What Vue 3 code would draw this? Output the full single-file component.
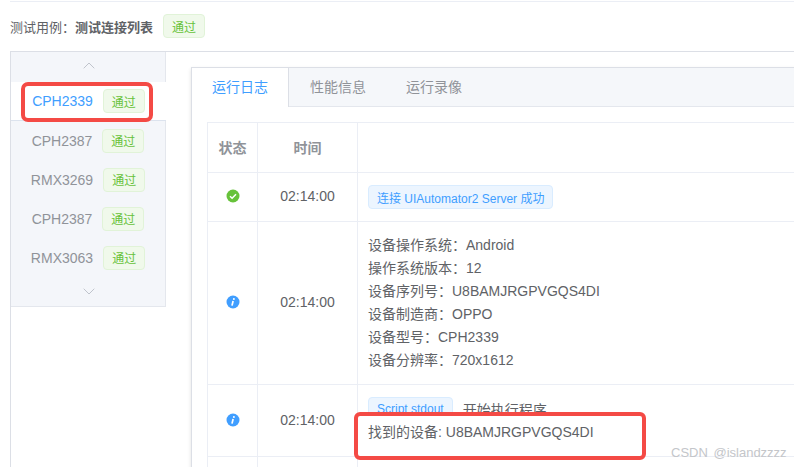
<script setup>
const devices = [
  { name: 'CPH2339', active: true },
  { name: 'CPH2387' },
  { name: 'RMX3269' },
  { name: 'CPH2387' },
  { name: 'RMX3063' }
]
const tabs = ['运行日志', '性能信息', '运行录像']
const infoLines = [
  '设备操作系统：Android',
  '操作系统版本：12',
  '设备序列号：U8BAMJRGPVGQS4DI',
  '设备制造商：OPPO',
  '设备型号：CPH2339',
  '设备分辨率：720x1612'
]
</script>

<template>
  <div class="page">
    <div class="title">
      <span class="label">测试用例：</span><span class="name">测试连接列表</span>
      <span class="tag green">通过</span>
    </div>

    <div class="frame">
      <aside class="nav">
        <div class="arrow up">
          <svg width="12" height="7" viewBox="0 0 12 7"><path d="M.7 6.3 6 1l5.3 5.3" fill="none" stroke="#c0c4cc" /></svg>
        </div>
        <div v-for="(d, i) in devices" :key="i" class="device" :class="{ active: d.active }">
          <span class="dev-name">{{ d.name }}</span>
          <span class="tag green">通过</span>
        </div>
        <div class="arrow down">
          <svg width="12" height="7" viewBox="0 0 12 7"><path d="M.7.7 6 6 11.3.7" fill="none" stroke="#c0c4cc" /></svg>
        </div>
      </aside>

      <main class="main">
        <section class="card">
          <div class="tabs">
            <div v-for="(t, i) in tabs" :key="t" class="tab" :class="{ current: i === 0 }">{{ t }}</div>
          </div>
          <div class="body">
            <div class="log">
              <div class="row head">
                <div class="c1">状态</div>
                <div class="c2">时间</div>
                <div class="c3"></div>
              </div>
              <div class="row r-ok">
                <div class="c1">
                  <svg width="14" height="14" viewBox="0 0 14 14">
                    <circle cx="7" cy="7" r="6.5" fill="#67c23a" />
                    <path d="M4 7.2 6.1 9.2 10 5.2" fill="none" stroke="#fff" stroke-width="1.5" />
                  </svg>
                </div>
                <div class="c2">02:14:00</div>
                <div class="c3"><span class="tag blue">连接 UIAutomator2 Server 成功</span></div>
              </div>
              <div class="row r-info">
                <div class="c1">
                  <svg width="14" height="14" viewBox="0 0 14 14">
                    <circle cx="7" cy="7" r="6.5" fill="#409eff" />
                    <circle cx="7.9" cy="3.9" r="1" fill="#fff" />
                    <path d="M7.1 6 6 10.6" fill="none" stroke="#fff" stroke-width="1.7" />
                  </svg>
                </div>
                <div class="c2">02:14:00</div>
                <div class="c3 lines">
                  <div v-for="l in infoLines" :key="l">{{ l }}</div>
                </div>
              </div>
              <div class="row r-script">
                <div class="c1">
                  <svg width="14" height="14" viewBox="0 0 14 14">
                    <circle cx="7" cy="7" r="6.5" fill="#409eff" />
                    <circle cx="7.9" cy="3.9" r="1" fill="#fff" />
                    <path d="M7.1 6 6 10.6" fill="none" stroke="#fff" stroke-width="1.7" />
                  </svg>
                </div>
                <div class="c2">02:14:00</div>
                <div class="c3 script">
                  <div class="script-top">
                    <span class="tag blue">Script stdout</span>
                    <span>开始执行程序</span>
                  </div>
                  <div class="found"><span>找到的设备: U8BAMJRGPVGQS4DI</span></div>
                </div>
              </div>
              <div class="row r-rest">
                <div class="c1"></div>
                <div class="c2"></div>
                <div class="c3"></div>
              </div>
            </div>
          </div>
        </section>
      </main>
    </div>

    <div class="watermark">CSDN @islandzzzz</div>
  </div>
</template>

<style scoped>
.page {
  position: relative;
  box-sizing: border-box;
  width: 794px;
  height: 467px;
  padding-left: 10px;
  overflow: hidden;
  background: #fff;
  color: #606266;
  font-family: "Liberation Sans", "Noto Sans CJK SC", sans-serif;
  font-size: 14px;
}
.title {
  display: flex;
  align-items: center;
  height: 24px;
  margin-top: 1px;
  padding-top: 12px;
  border-top: 1px solid #ebeef5;
  font-size: 13px;
}
.name {
  font-weight: 700;
}
.title .tag {
  margin-left: 10px;
}
.tag {
  box-sizing: border-box;
  display: inline-flex;
  align-items: center;
  height: 24px;
  padding: 0 8px;
  border: 1px solid;
  border-radius: 4px;
  font-size: 12px;
  white-space: nowrap;
}
.green {
  color: #67c23a;
  background: #f0f9eb;
  border-color: #e1f3d8;
}
.blue {
  color: #409eff;
  background: #ecf5ff;
  border-color: #d9ecff;
}
.frame {
  display: flex;
  align-items: flex-start;
  width: 810px;
  height: 420px;
  margin-top: 13px;
  border-top: 1px solid #dcdfe6;
  border-left: 1px solid #dcdfe6;
}
.nav {
  box-sizing: border-box;
  flex: none;
  width: 155px;
  height: 255px;
  background: #f4f6fa;
  border-right: 1px solid #e4e7ed;
  border-bottom: 1px solid #e4e7ed;
}
.arrow {
  display: flex;
  justify-content: center;
  padding-left: 1px;
}
.arrow.up {
  height: 30px;
  padding-top: 10px;
  box-sizing: border-box;
}
.arrow.down {
  height: 30px;
  padding-top: 11px;
  box-sizing: border-box;
}
.device {
  position: relative;
  display: flex;
  align-items: center;
  justify-content: center;
  gap: 10px;
  height: 39px;
  color: #909399;
  box-sizing: border-box;
}
.device.active {
  width: 155px;
  height: 39px;
  background: #fff;
  color: #409eff;
  border-bottom: 1px solid #dce3ee;
}
.device.active::after {
  content: "";
  position: absolute;
  left: 10px;
  top: 0;
  width: 132px;
  height: 40px;
  box-sizing: border-box;
  border: 4px solid #f44a45;
  border-radius: 7px;
}
.main {
  flex: 1;
  padding: 15px 0 0 25px;
  min-width: 0;
}
.card {
  height: 420px;
  background: #fff;
  border: 1px solid #dcdfe6;
  box-shadow: 0 2px 4px rgba(0, 0, 0, 0.12);
}
.tabs {
  display: flex;
  height: 38px;
  background: #f5f7fa;
  border-bottom: 1px solid #e4e7ed;
}
.tab {
  height: 38px;
  padding: 0 20px;
  line-height: 38px;
  color: #909399;
}
.tab:nth-child(2) {
  margin-left: 1px;
}
.tab.current {
  height: 39px;
  background: #fff;
  color: #409eff;
  border-right: 1px solid #dcdfe6;
}
.body {
  padding: 15px;
}
.log {
  border-top: 1px solid #ebeef5;
  border-left: 1px solid #ebeef5;
}
.row {
  display: flex;
  box-sizing: border-box;
  border-bottom: 1px solid #ebeef5;
}
.c1,
.c2 {
  flex: none;
  display: flex;
  align-items: center;
  justify-content: center;
  box-sizing: border-box;
  padding-bottom: 2px;
  border-right: 1px solid #ebeef5;
}
.c1 {
  width: 50px;
}
.c2 {
  width: 100px;
}
.c3 {
  flex: 1;
  display: flex;
  align-items: center;
  padding: 0 10px;
}
.head {
  height: 50px;
  color: #909399;
  font-weight: 700;
}
.r-ok {
  height: 49px;
}
.r-info {
  height: 163px;
}
.lines {
  display: block;
  padding-top: 12px;
  line-height: 23px;
}
.r-script {
  height: 72px;
}
.script {
  display: block;
  padding-top: 12px;
}
.script-top {
  display: flex;
  align-items: center;
  gap: 10px;
}
.found {
  position: relative;
  line-height: 23px;
}
.found::before {
  content: "";
  position: absolute;
  left: -14px;
  top: -9px;
  width: 292px;
  height: 48px;
  box-sizing: border-box;
  background: #fff;
  border: 4px solid #f44a45;
  border-radius: 6px;
}
.found span {
  position: relative;
}
.r-rest {
  height: 40px;
}
.watermark {
  position: absolute;
  left: 671px;
  top: 445px;
  color: #c4c6ca;
  font-size: 13px;
  word-spacing: 2px;
  line-height: 16px;
  white-space: nowrap;
}
</style>

<style>
html,
body {
  margin: 0;
  overflow: hidden;
}
</style>
